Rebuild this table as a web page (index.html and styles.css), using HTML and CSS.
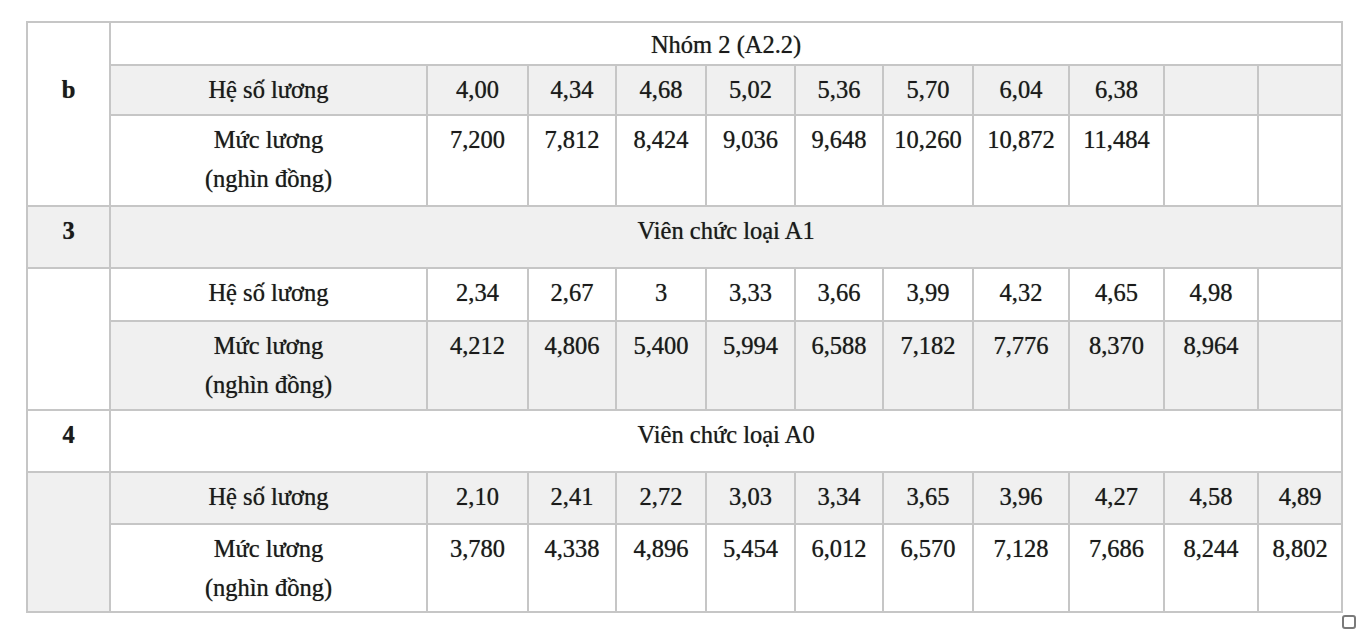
FILE: index.html
```html
<!DOCTYPE html>
<html lang="vi">
<head>
<meta charset="utf-8">
<title>Bảng lương viên chức</title>
<link rel="stylesheet" href="styles.css">
</head>
<body>
<div class="page">
  <table class="salary">
    <colgroup>
      <col class="c-idx"><col class="c-label">
      <col class="c1"><col class="c2"><col class="c3"><col class="c4"><col class="c5">
      <col class="c6"><col class="c7"><col class="c8"><col class="c9"><col class="c10">
    </colgroup>
    <tbody>
      <tr class="row-title">
        <td class="idx idx-b" rowspan="3">b</td>
        <td colspan="11">Nhóm 2 (A2.2)</td>
      </tr>
      <tr class="row-coef g1">
        <td>Hệ số lương</td>
        <td>4,00</td><td>4,34</td><td>4,68</td><td>5,02</td><td>5,36</td>
        <td>5,70</td><td>6,04</td><td>6,38</td><td></td><td></td>
      </tr>
      <tr class="row-pay g1">
        <td>Mức lương<br>(nghìn đồng)</td>
        <td>7,200</td><td>7,812</td><td>8,424</td><td>9,036</td><td>9,648</td>
        <td>10,260</td><td>10,872</td><td>11,484</td><td></td><td></td>
      </tr>
      <tr class="row-section">
        <td class="idx">3</td>
        <td colspan="11">Viên chức loại A1</td>
      </tr>
      <tr class="row-coef g2">
        <td class="idx" rowspan="2"></td>
        <td>Hệ số lương</td>
        <td>2,34</td><td>2,67</td><td>3</td><td>3,33</td><td>3,66</td>
        <td>3,99</td><td>4,32</td><td>4,65</td><td>4,98</td><td></td>
      </tr>
      <tr class="row-pay g2">
        <td>Mức lương<br>(nghìn đồng)</td>
        <td>4,212</td><td>4,806</td><td>5,400</td><td>5,994</td><td>6,588</td>
        <td>7,182</td><td>7,776</td><td>8,370</td><td>8,964</td><td></td>
      </tr>
      <tr class="row-section">
        <td class="idx">4</td>
        <td colspan="11">Viên chức loại A0</td>
      </tr>
      <tr class="row-coef g3">
        <td class="idx" rowspan="2"></td>
        <td>Hệ số lương</td>
        <td>2,10</td><td>2,41</td><td>2,72</td><td>3,03</td><td>3,34</td>
        <td>3,65</td><td>3,96</td><td>4,27</td><td>4,58</td><td>4,89</td>
      </tr>
      <tr class="row-pay g3">
        <td>Mức lương<br>(nghìn đồng)</td>
        <td>3,780</td><td>4,338</td><td>4,896</td><td>5,454</td><td>6,012</td>
        <td>6,570</td><td>7,128</td><td>7,686</td><td>8,244</td><td>8,802</td>
      </tr>
    </tbody>
  </table>
  <div class="corner"><span class="corner-box"></span></div>
</div>
</body>
</html>
```

FILE: styles.css
```css
html, body {
  margin: 0;
  padding: 0;
  background: #ffffff;
}

body {
  font-family: "Liberation Serif", "Times New Roman", serif;
  color: #1a1a1a;
}

.page {
  padding: 21px 0 0 26px;
  width: 1330px;
}

.salary {
  border-collapse: collapse;
  table-layout: fixed;
  width: 1316px;
  font-size: 24.5px;
  line-height: 39px;
}

.salary td {
  border: 2px solid #c6c6c6;
  padding: 4px 2px 3px;
  text-align: center;
  vertical-align: top;
  text-shadow: 0 0 0.7px rgba(0, 0, 0, 0.6);
}

.salary tr:nth-child(even) td {
  background: #f0f0f0;
}

.salary tr:nth-child(odd) td {
  background: #ffffff;
}

.c-idx { width: 83px; }
.c-label { width: 317px; }
.c1 { width: 101px; }
.c2 { width: 88px; }
.c3 { width: 90px; }
.c4 { width: 89px; }
.c5 { width: 88px; }
.c6 { width: 90px; }
.c7 { width: 96px; }
.c8 { width: 95px; }
.c9 { width: 94px; }
.c10 { width: 84px; }

.row-title { height: 40px; }
.row-title td { padding-top: 2px; padding-bottom: 0; }
.row-section { height: 62px; }

.row-coef.g1 { height: 50px; }
.row-pay.g1 { height: 91px; }
.row-coef.g2 { height: 53px; }
.row-pay.g2 { height: 89px; }
.row-coef.g3 { height: 52px; }
.row-pay.g3 { height: 88px; }

.idx {
  font-weight: bold;
}

.salary td.idx-b {
  padding-top: 47px;
}

.corner {
  display: flex;
  justify-content: flex-end;
  width: 1330px;
  margin-top: 2px;
}

.corner-box {
  display: block;
  width: 10px;
  height: 10px;
  border: 2px solid #7a7a7a;
  border-radius: 3px;
}
```
